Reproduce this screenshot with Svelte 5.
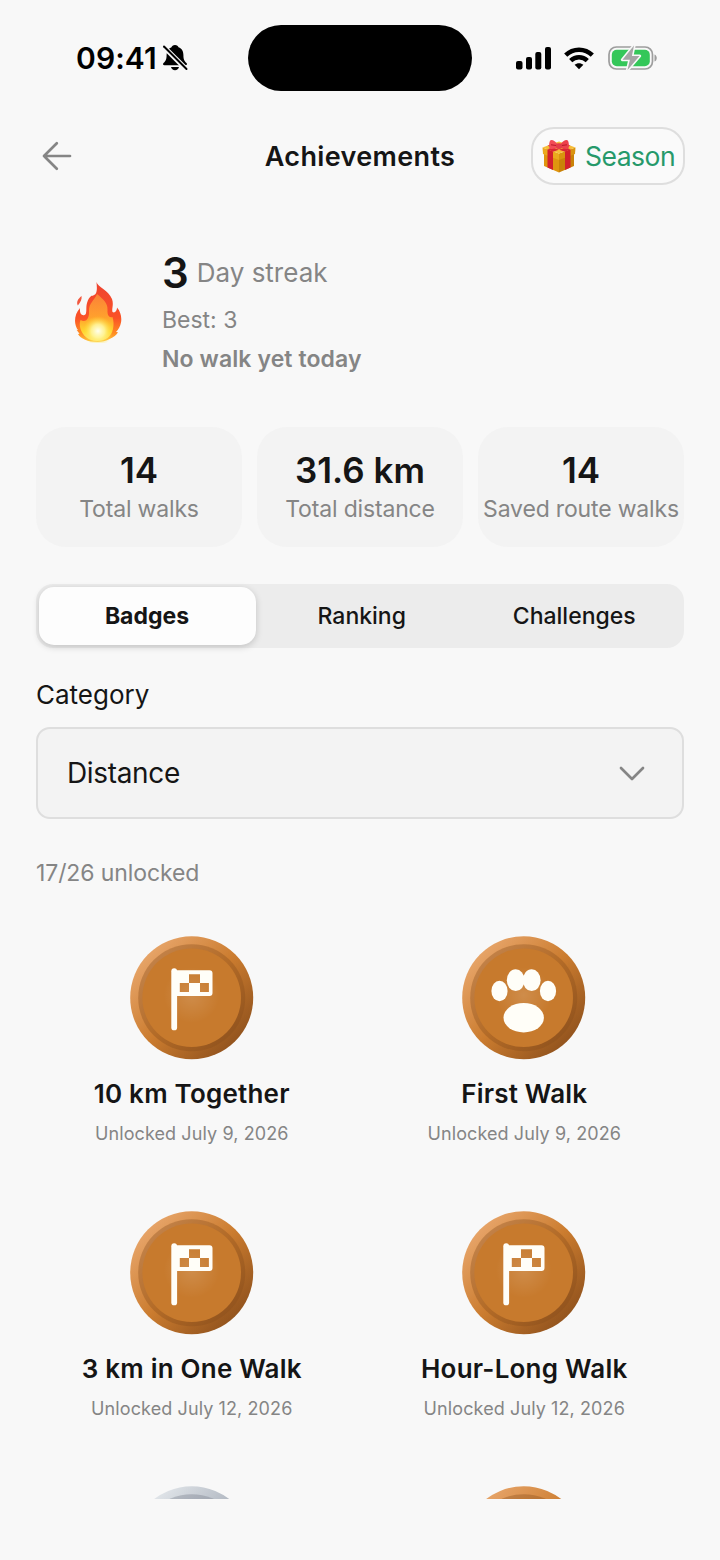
<script>
  const stats = [
    { value: '14', label: 'Total walks' },
    { value: '31.6 km', label: 'Total distance' },
    { value: '14', label: 'Saved route walks' },
  ]
  const tabs = ['Badges', 'Ranking', 'Challenges']
  let active = $state('Badges')

  const badges = [
    { title: '10 km Together', date: 'Unlocked July 9, 2026', icon: 'flag', tier: 'bronze' },
    { title: 'First Walk', date: 'Unlocked July 9, 2026', icon: 'paw', tier: 'bronze' },
    { title: '3 km in One Walk', date: 'Unlocked July 12, 2026', icon: 'flag', tier: 'bronze' },
    { title: 'Hour-Long Walk', date: 'Unlocked July 12, 2026', icon: 'flag', tier: 'bronze' },
    { title: '', date: '', icon: '', tier: 'silver' },
    { title: '', date: '', icon: '', tier: 'bronze' },
  ]
</script>

<svg class="defs" width="0" height="0">
  <defs>
    <linearGradient id="bronze" x1="0.12" y1="0.12" x2="0.88" y2="0.88">
      <stop offset="0" stop-color="#e8a66b" />
      <stop offset="0.5" stop-color="#cb7c2f" />
      <stop offset="1" stop-color="#90521d" />
    </linearGradient>
    <linearGradient id="silver" x1="0.12" y1="0.12" x2="0.88" y2="0.88">
      <stop offset="0" stop-color="#e4e8ec" />
      <stop offset="0.5" stop-color="#adb4be" />
      <stop offset="1" stop-color="#747d89" />
    </linearGradient>
    <radialGradient id="glow">
      <stop offset="0" stop-color="#fff" stop-opacity="0.14" />
      <stop offset="1" stop-color="#fff" stop-opacity="0" />
    </radialGradient>
  </defs>
</svg>

<div class="screen">
  <div class="status">
    <div class="clock">
      <span>09:41</span>
      <svg width="26" height="28" viewBox="0 0 26 28">
        <path d="M13 1c-2 0-3.200 1-3.500 2.300C6 4.500 4.600 7.400 4.600 11c0 5.200-1.300 6.300-3.100 8-.9 1-.5 2.200.9 2.200h21.200c1.400 0 1.800-1.200.9-2.200-1.800-1.700-3.100-2.800-3.100-8 0-3.600-1.400-6.500-4.900-7.700C16.200 2 15 1 13 1z" />
        <path d="M9 23h8c-.4 2-2 3.200-4 3.200S9.400 25 9 23z" />
        <path d="M1.500 2.500 25 26" stroke="#f8f8f8" stroke-width="4.800" />
        <path d="M2 2.500 24.500 25" stroke="#000" stroke-width="2" stroke-linecap="round" />
      </svg>
    </div>
    <div class="island"></div>
    <div class="signals">
      <svg width="36" height="23" viewBox="0 0 36 23">
        <rect x="0" y="14" width="6.500" height="8.500" rx="2" />
        <rect x="10" y="10" width="6" height="12.500" rx="2" />
        <rect x="19.300" y="5" width="6" height="17.500" rx="2" />
        <rect x="29" y="0" width="6" height="22.500" rx="2" />
      </svg>
      <svg class="wifi" width="30" height="23" viewBox="0 0 30 23" fill="none" stroke="#000" stroke-width="4.500">
        <path d="M1.700 8.200a19 19 0 0 1 26.600 0" />
        <path d="M6.700 13.600a12 12 0 0 1 16.600 0" />
        <path d="M15 22.300l-4.400-4.500c2.400-2.200 6.400-2.200 8.800 0z" fill="#000" stroke="none" />
      </svg>
      <svg class="battery" width="50" height="26" viewBox="0 0 50 26">
        <rect x="1" y="2" width="43.500" height="22" rx="7.500" fill="none" stroke="#9d9d9d" stroke-width="1.700" />
        <path d="M46.500 9.500c3 1 3 6 0 7z" fill="#9d9d9d" />
        <rect x="3.800" y="4.700" width="38" height="16.600" rx="5" fill="#34c759" />
        <path d="M26 .6 14.500 14.700h7.400L19.500 25 31.500 11h-7.600z" fill="#a5a5a5" stroke="#f8f8f8" stroke-width="3.200" paint-order="stroke" stroke-linejoin="round" />
      </svg>
    </div>
  </div>

  <header>
    <svg class="back" width="30" height="30" viewBox="0 0 30 30" fill="none" stroke="#858585" stroke-width="2.700" stroke-linecap="round" stroke-linejoin="round">
      <path d="M28 15H2M14.800 2.200 2 15l12.800 12.800" />
    </svg>
    <h1>Achievements</h1>
    <button class="season">
      <svg width="34" height="34" viewBox="0 0 34 34">
        <path d="M2 14l15 6v13.500L2 27z" fill="#df950f" />
        <path d="M32 14l-15 6v13.500L32 27z" fill="#c98208" />
        <path d="M.5 8.500 17 14.500V21L1 15z" fill="#eba91d" />
        <path d="M33.500 8.500 17 14.500V21l16-6z" fill="#d9940f" />
        <path d="M.5 8.500 17 2.500l16.500 6L17 14.500z" fill="#f6bd38" />
        <path d="M5.500 10.300l5.500 2.100V31L5.500 28.600zM28.500 10.300 23 12.400V31l5.500-2.400z" fill="#d3202c" />
        <path d="M5.500 10.300 22 4.500l6.500 2.300L11 12.700zM28.500 10.300 12 4.500 5.500 6.800 23 12.700z" fill="#d92633" />
        <path d="M16 6C13 1 9 0 8 1.700 7 4 6.600 8.300 8 9.500c2 1.300 6-.2 8-1.500z" fill="#f24b56" />
        <path d="M18 6c3-5 7-6 8-4.300 1 2.300 1.400 6.600 0 7.800-2 1.300-6-.2-8-1.500z" fill="#ed3f4c" />
        <path d="M9 5.800l7 .9M25 5.800l-7 .9" stroke="#b71827" stroke-width="1" />
        <rect x="14" y="4.200" width="6" height="5.800" rx="2" fill="#e43c49" />
      </svg>
      <span>Season</span>
    </button>
  </header>

  <section class="streak">
    <svg width="48" height="62" viewBox="0 0 48 62">
      <defs>
        <linearGradient id="flame" x1="0" y1="0" x2="0" y2="1">
          <stop offset="0" stop-color="#ee4330" />
          <stop offset="0.6" stop-color="#fa5227" />
          <stop offset="0.85" stop-color="#ff8b22" />
          <stop offset="1" stop-color="#ffc43a" />
        </linearGradient>
        <linearGradient id="core" x1="0" y1="0" x2="0" y2="1">
          <stop offset="0" stop-color="#fb8138" />
          <stop offset="0.5" stop-color="#ffa12d" />
          <stop offset="0.8" stop-color="#ffd62f" />
          <stop offset="1" stop-color="#ffe978" />
        </linearGradient>
        <radialGradient id="heat">
          <stop offset="0" stop-color="#fffff0" />
          <stop offset="0.45" stop-color="#fff7a0" stop-opacity="0.85" />
          <stop offset="1" stop-color="#ffe02d" stop-opacity="0" />
        </radialGradient>
      </defs>
      <path d="M22.500 1c1 5 12 8 15.500 17 2 5.500-.5 9.500.5 13 2.500 1.500 4.500-1.500 4.500-4.500 3.500 4 5 9.500 4 15-.7 4-2.500 7-5 9.500l2 .2c-1.500 3-4.500 5-8 6.500C32 60 27.500 61 23.500 61 14 61 6.500 57.500 4 53l1.500-.2-3-4 1.600.4C-.5 43.500 0 33.500 6 27c-.5 4.500 1 8 4.500 7 3-1 1-7 2.500-12 1-3.500 2.500-6 4.500-7.200 1.300.2 2.500-.5 4-1.800C23.500 10 22.800 5 22.500 1z" fill="url(#flame)" />
      <path d="M23 13c6 5 11 9 10.500 16-.3 5 1.500 8 5 7 2.500 8 .5 17-5 21-6 4-16 4-21-.5C6.500 52 4.500 44 6.500 39c6 3 9-2 8.500-9-.3-8 5-10 8-17z" fill="url(#core)" />
      <ellipse cx="24" cy="50" rx="15" ry="15" fill="url(#heat)" />
      <path d="M7.600 15c.4 3-.8 5.800-3.800 9.500-1.800-3.600.2-6.500 3.800-9.500z" fill="#f2583f" />
    </svg>
    <div class="streak-text">
      <div class="days"><strong>3</strong><span>Day streak</span></div>
      <div class="best">Best: 3</div>
      <div class="today">No walk yet today</div>
    </div>
  </section>

  <section class="stats">
    {#each stats as stat}
      <div class="stat">
        <strong>{stat.value}</strong>
        <span>{stat.label}</span>
      </div>
    {/each}
  </section>

  <nav class="tabs">
    {#each tabs as tab}
      <button class:active={active === tab} onclick={() => (active = tab)}>{tab}</button>
    {/each}
  </nav>

  <div class="label">Category</div>
  <div class="select">
    <span>Distance</span>
    <svg width="26" height="15" viewBox="0 0 26 15" fill="none" stroke="#858585" stroke-width="2.700" stroke-linecap="round" stroke-linejoin="round">
      <path d="M2 2l11 11L24 2" />
    </svg>
  </div>
  <div class="count">17/26 unlocked</div>

  <section class="badges">
    {#each badges as badge}
      <article>
        <svg width="124" height="124" viewBox="0 0 124 124">
          <circle cx="61.700" cy="61.700" r="61.500" fill="url(#{badge.tier})" />
          <circle cx="61.700" cy="61.700" r="53.500" fill={badge.tier === 'bronze' ? '#874d1d' : '#747b87'} fill-opacity="0.36" />
          <circle cx="61.700" cy="61.700" r="49.300" fill={badge.tier === 'bronze' ? '#c77a2d' : '#a7afba'} />
          <circle cx="61.700" cy="59" r="28" fill="url(#glow)" />
          {#if badge.icon === 'flag'}
            <rect x="41.300" y="32.300" width="5.800" height="62" rx="2.900" fill="#fffef8" />
            <path fill-rule="evenodd" fill="#fffef8" d="M45 34.200h34.500a3 3 0 0 1 3 3v19.800a3 3 0 0 1-3 3H45zM59 38.200V47H49.800v9H59v-9h11v9h8.900v-9H70v-8.800z" />
          {:else if badge.icon === 'paw'}
            <g fill="#fffef8">
              <ellipse cx="37.500" cy="55" rx="8.100" ry="10.200" />
              <ellipse cx="53.700" cy="44.200" rx="8.900" ry="10.900" />
              <ellipse cx="69.700" cy="44.200" rx="8.900" ry="10.900" />
              <ellipse cx="86" cy="55" rx="8.100" ry="10.200" />
              <ellipse cx="61.700" cy="81.700" rx="20.200" ry="14.800" />
            </g>
          {/if}
        </svg>
        <h2>{badge.title}</h2>
        <p>{badge.date}</p>
      </article>
    {/each}
  </section>
</div>

<style>
  :global(body) {
    background: #f8f8f8;
  }
  .defs {
    position: absolute;
  }
  .screen {
    width: 720px;
    height: 1560px;
    box-sizing: border-box;
    padding: 0 36px;
    overflow: hidden;
    background: #f8f8f8;
    color: #151515;
    font-family: Inter, "Liberation Sans", sans-serif;
  }
  button {
    font: inherit;
    color: inherit;
    background: none;
    border: 0;
    padding: 0;
  }
  .status {
    height: 116px;
    display: grid;
    grid-template-columns: 1fr 224px 1fr;
    align-items: center;
    color: #000;
  }
  .clock {
    display: flex;
    align-items: center;
    gap: 5px;
    padding-left: 40px;
    font-size: 30px;
    font-weight: 600;
    letter-spacing: 0.1px;
  }
  .island {
    height: 66px;
    border-radius: 33px;
    background: #000;
  }
  .signals {
    display: flex;
    align-items: center;
    padding-left: 44px;
  }
  .wifi {
    margin-left: 12px;
  }
  .battery {
    margin-left: 14px;
  }
  header {
    height: 80px;
    display: grid;
    grid-template-columns: 1fr auto 1fr;
    align-items: center;
  }
  .back {
    margin-left: 6px;
  }
  h1 {
    margin: 0;
    font-size: 27px;
    font-weight: 600;
    letter-spacing: 0.35px;
  }
  .season {
    justify-self: end;
    display: flex;
    align-items: center;
    gap: 9px;
    width: 154px;
    height: 58px;
    box-sizing: border-box;
    margin-right: -1px;
    padding-left: 9px;
    border: 2px solid #dedede;
    border-radius: 23px;
    background: #fafafa;
    color: #26996a;
    font-size: 26.5px;
    letter-spacing: -0.5px;
  }
  .streak {
    height: 231px;
    display: flex;
    align-items: center;
    gap: 39px;
    padding-left: 38px;
  }
  .streak-text {
    display: flex;
    flex-direction: column;
    padding: 0 0 2px 1px;
    color: #858585;
    font-size: 23px;
    line-height: 30px;
  }
  .days {
    height: 52px;
    display: flex;
    align-items: center;
    gap: 8px;
    font-size: 26px;
    line-height: 52px;
  }
  .days strong {
    color: #151515;
    font-size: 42px;
    font-weight: 600;
  }
  .best {
    margin-top: 6px;
  }
  .today {
    margin-top: 9px;
    font-weight: 600;
    letter-spacing: 0.1px;
  }
  .stats {
    display: grid;
    grid-template-columns: repeat(3, 1fr);
    gap: 15px;
  }
  .stat {
    height: 120px;
    box-sizing: border-box;
    padding-top: 21px;
    border-radius: 30px;
    background: #f3f3f3;
    display: flex;
    flex-direction: column;
    align-items: center;
    white-space: nowrap;
  }
  .stat strong {
    font-size: 35px;
    line-height: 44px;
    font-weight: 600;
  }
  .stat span {
    margin-top: 2px;
    color: #858585;
    font-size: 23px;
    line-height: 30px;
    letter-spacing: -0.17px;
  }
  .tabs {
    height: 64px;
    box-sizing: border-box;
    margin-top: 37px;
    padding: 3px;
    border-radius: 17px;
    background: #ececec;
    display: grid;
    grid-template-columns: 217px 1fr 1fr;
  }
  .tabs button {
    padding-right: 1px;
    font-size: 23px;
    font-weight: 500;
    border-radius: 15px;
  }
  .tabs .active {
    font-weight: 700;
    background: #fdfdfd;
    box-shadow: 0 2px 7px rgba(0, 0, 0, 0.18);
  }
  .label {
    margin-top: 30px;
    font-size: 26px;
    line-height: 34px;
  }
  .select {
    height: 92px;
    box-sizing: border-box;
    margin-top: 15px;
    padding: 0 37px 0 29px;
    border: 2px solid #dedede;
    border-radius: 14px;
    background: #f3f3f3;
    display: flex;
    align-items: center;
    justify-content: space-between;
    font-size: 28px;
    letter-spacing: -0.35px;
  }
  .count {
    margin-top: 39px;
    color: #858585;
    font-size: 23px;
    line-height: 30px;
    letter-spacing: -0.1px;
  }
  .badges {
    width: 644px;
    height: 563px;
    margin-top: 48px;
    overflow: hidden;
    display: grid;
    grid-template-columns: 1fr 1fr;
    grid-auto-rows: 275px;
    column-gap: 21px;
  }
  article {
    display: flex;
    flex-direction: column;
    align-items: center;
    white-space: nowrap;
  }
  h2 {
    margin: 17px 0 0;
    font-size: 26px;
    line-height: 34px;
    font-weight: 600;
    letter-spacing: 0.22px;
  }
  p {
    margin: 11px 0 0;
    color: #858585;
    font-size: 18px;
    line-height: 24px;
    letter-spacing: 0.1px;
  }
</style>
